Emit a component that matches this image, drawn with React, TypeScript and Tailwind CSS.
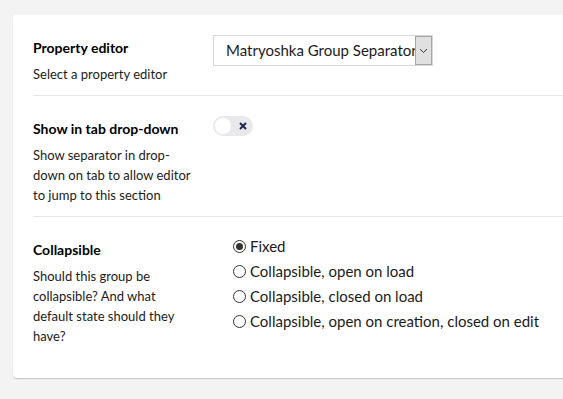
import React from "react";

const options = [
  "Fixed",
  "Collapsible, open on load",
  "Collapsible, closed on load",
  "Collapsible, open on creation, closed on edit",
];

function Row({ label, description, children, last }: { label: string; description: string; children: React.ReactNode; last?: boolean }) {
  return (
    <div className={`flex gap-5 pt-5 pb-[11px] ${last ? "" : "border-b border-[#e9e9eb]"}`}>
      <div className="w-[160px] shrink-0">
        <div className="mt-[3px] text-[14px] leading-5 font-bold text-[#000]">{label}</div>
        <div className="mt-[6px] text-[13px] leading-5 text-[#1b1b1b]">{description}</div>
      </div>
      <div className="flex-1">{children}</div>
    </div>
  );
}

export default function App() {
  return (
    <div className="min-h-[399px] w-[563px] overflow-hidden bg-[#f4f3f3] pt-[15px] pl-[13px] font-['Lato',sans-serif]">
      <div className="w-[600px] rounded-[3px] bg-white pl-5 pb-[21px] shadow-[0_1px_1px_rgba(0,0,0,0.2)]">
        <Row label="Property editor" description="Select a property editor">
          <div className="flex h-[31px] w-[220px] items-center border border-[#d8d7d9] pl-3">
            <span className="flex-1 overflow-hidden whitespace-nowrap text-[15px] text-[#1b1b1b]">Matryoshka Group Separator</span>
            <span className="flex h-[29px] w-[17px] shrink-0 items-center justify-center border border-[#a5a5a5] bg-[#e0e0e0]">
              <svg width="9" height="6" viewBox="0 0 9 6" fill="none" stroke="#333" strokeWidth="1">
                <path d="M1 1l3.5 3.5L8 1" />
              </svg>
            </span>
          </div>
        </Row>
        <Row
          label="Show in tab drop-down"
          description="Show separator in drop-down on tab to allow editor to jump to this section"
        >
          <div className="relative h-5 w-10 rounded-full bg-[#e9e9eb]">
            <span className="absolute left-[2px] top-[2px] h-4 w-4 rounded-full bg-white" />
            <svg className="absolute right-[6px] top-[6px]" width="8" height="8" viewBox="0 0 8 8" stroke="#1b264f" strokeWidth="2">
              <path d="M1 1l6 6M7 1l-6 6" />
            </svg>
          </div>
        </Row>
        <Row
          label="Collapsible"
          description="Should this group be collapsible? And what default state should they have?"
          last
        >
          <div className="-mt-[3px] flex flex-col pl-5">
            {options.map((o, i) => (
              <label key={o} className="flex h-[25px] items-center gap-[4px] text-[15px] text-[#1b1b1b]">
                <span className="flex h-[13px] w-[13px] items-center justify-center rounded-full border border-[#333]">
                  {i === 0 && <span className="h-[7px] w-[7px] rounded-full bg-[#333]" />}
                </span>
                {o}
              </label>
            ))}
          </div>
        </Row>
      </div>
    </div>
  );
}
